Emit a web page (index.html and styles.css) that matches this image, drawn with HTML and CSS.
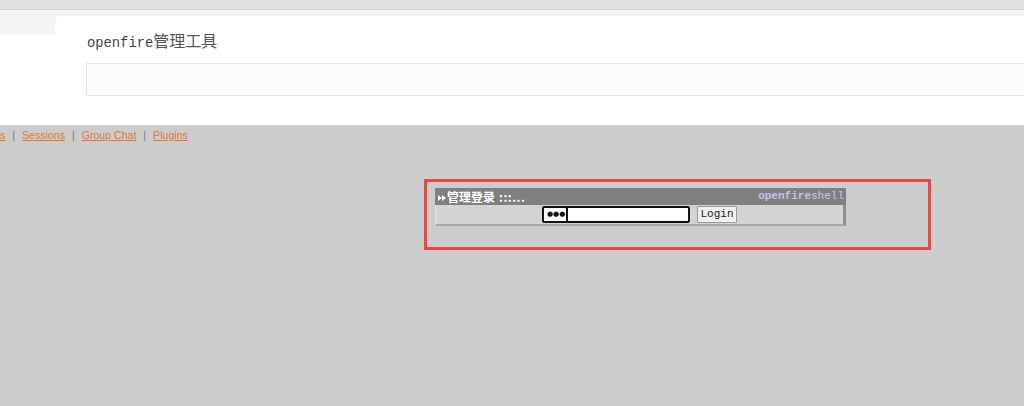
FILE: index.html
```html
<!DOCTYPE html>
<html lang="zh">
<head>
<meta charset="UTF-8">
<title>openfire管理工具</title>
<link rel="stylesheet" href="styles.css">
</head>
<body>

<div class="topbar"></div>

<!-- header card -->
<div class="header">
  <div class="stub"></div>
  <div class="card">
    <h1 class="title"><span class="latin">openfire</span>管理工具</h1>
    <div class="searchbox"></div>
  </div>
</div>

<!-- nav links -->
<div class="nav">
  <a href="#">s</a> <span class="sep">|</span>
  <a href="#">Sessions</a> <span class="sep">|</span>
  <a href="#">Group Chat</a> <span class="sep">|</span>
  <a href="#">Plugins</a>
</div>

<!-- login panel -->
<div class="mark">
  <div class="panel">
    <div class="panel-head">
      <span class="panel-title">
        <svg class="ff" width="8" height="8" viewBox="0 0 8 8"><path d="M0 1 L4 4 L0 7 Z M4 1 L8 4 L4 7 Z" fill="#fff"/></svg>管理登录 <span class="dots">:::...</span>
      </span>
      <span class="brand"><b>openfire</b>shell</span>
    </div>
    <div class="panel-body">
      <div class="pass"><span class="bullets">●●●</span><span class="caret"></span></div>
      <button class="login">Login</button>
    </div>
  </div>
</div>

</body>
</html>
```

FILE: styles.css
```css
body { margin: 0; background: #cccccc; font-family: "Liberation Sans", Arial, sans-serif; overflow: hidden; }

.topbar { height: 9px; background: #e2e2e2; border-bottom: 1px solid #d4d4d4; }

.header {
  display: flex;
  height: 115px;
  background: linear-gradient(#f4f4f4 0 6px, #fff 6px);
}
.stub { width: 57px; height: 25px; background: #f4f4f4; flex: none; margin-right: -2px; }
.card {
  flex: 1;
  margin-top: 6px;
  background: #fff;
  border-top-left-radius: 7px;
  padding-left: 31px;
}
.title {
  margin: 14px 0 0 1px;
  height: 33px;
  font: normal 16px/20px "Noto Sans CJK SC", "Liberation Mono", monospace;
  color: #555;
}
.title .latin { font-family: "Liberation Mono", monospace; font-size: 13.8px; color: #444; }
.searchbox { height: 31px; border: 1px solid #e6e6e6; border-right: 0; background: #fcfcfc; }

.nav { padding-top: 4px; font-size: 10.6px; line-height: 13px; color: #777; }
.nav a { color: #e07a2a; text-decoration: underline; }
.nav .sep { margin: 0 4px; }

.mark {
  width: 501px;
  height: 65px;
  margin: 37px 0 0 424px;
  border: 3px solid #f04444;
  box-sizing: content-box;
}
.panel { width: 411px; margin: 6px 0 0 8px; background: #d4d4d4; }
.panel-head {
  display: flex;
  justify-content: space-between;
  align-items: center;
  height: 17px;
  background: #808080;
  padding: 0 2px 0 3px;
}
.panel-title {
  color: #fff;
  font: bold 12px/17px "Noto Sans CJK SC", sans-serif;
  display: flex;
  align-items: center;
}
.ff { margin-right: 1px; margin-top: 2px; }
.dots { margin-left: 4px; letter-spacing: 0.5px; }
.brand { color: #c4c4ee; font: 11px/17px "Liberation Mono", monospace; }
.brand b { font-weight: bold; }

.panel-body {
  display: flex;
  justify-content: center;
  align-items: center;
  gap: 7px;
  height: 17px;
  padding: 1px 0;
  border-left: 1px solid #e4e4e4;
  border-bottom: 2px solid #a8a8a8;
  border-right: 3px solid #909090;
}
.pass {
  width: 141px;
  height: 13px;
  border: 2px solid #111;
  border-radius: 2px;
  background: #fff;
  display: flex;
  align-items: center;
  padding-left: 3px;
  box-sizing: content-box;
}
.bullets { font: 7px/13px "DejaVu Sans", sans-serif; letter-spacing: 0; color: #111; }
.caret { width: 2px; height: 13px; margin-left: 1px; background: #111; }
.login {
  width: 40px;
  height: 17px;
  padding: 0;
  background: #f0f0f0;
  border: 1px solid #999;
  border-radius: 1px;
  font: 11px/15px "Liberation Mono", monospace;
  color: #222;
}
```
